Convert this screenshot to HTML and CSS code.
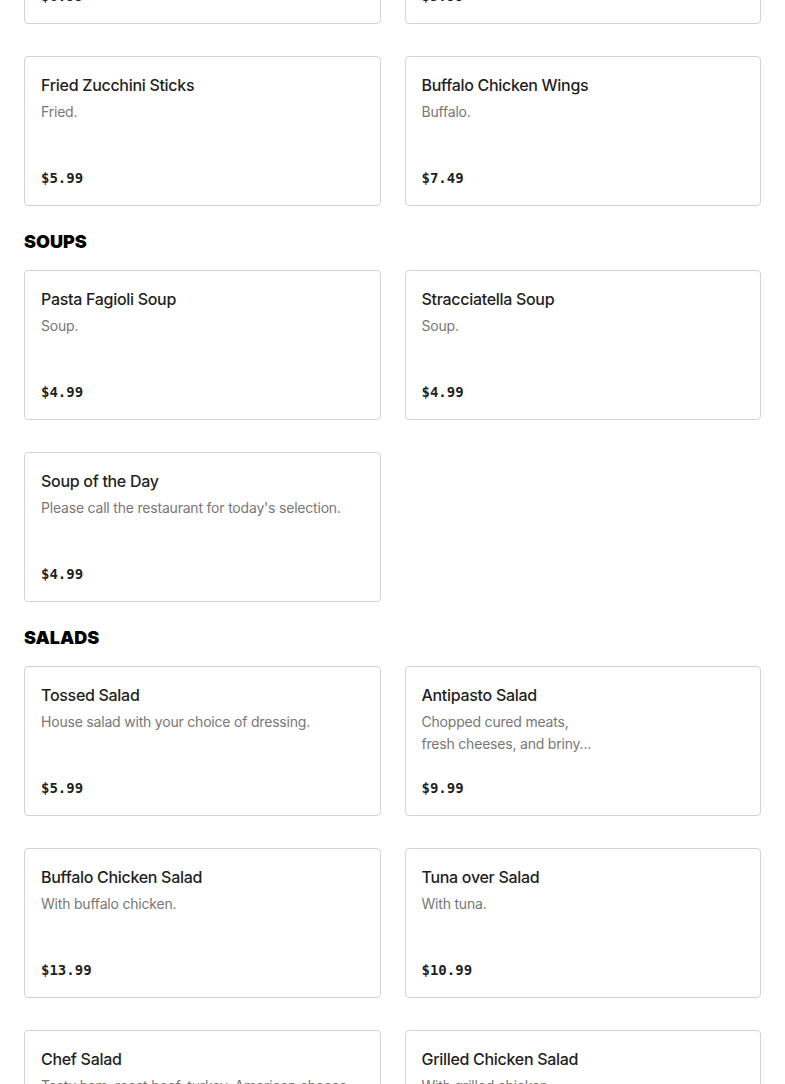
FILE: index.html
```html
<!DOCTYPE html>
<html lang="en">
<head>
<meta charset="utf-8">
<title>Menu</title>
<link rel="stylesheet" href="styles.css">
</head>
<body>
<main class="menu">
  <section class="section">
    <div class="grid">
      <article class="card"><h3 class="title">Mozzarella Sticks</h3><p class="desc">Fried.</p><p class="price">$6.99</p></article>
      <article class="card"><h3 class="title">Garlic Knots</h3><p class="desc">Baked.</p><p class="price">$5.99</p></article>
      <article class="card"><h3 class="title">Fried Zucchini Sticks</h3><p class="desc">Fried.</p><p class="price">$5.99</p></article>
      <article class="card"><h3 class="title">Buffalo Chicken Wings</h3><p class="desc">Buffalo.</p><p class="price">$7.49</p></article>
    </div>
  </section>
  <section class="section">
    <h2 class="heading">SOUPS</h2>
    <div class="grid">
      <article class="card"><h3 class="title">Pasta Fagioli Soup</h3><p class="desc">Soup.</p><p class="price">$4.99</p></article>
      <article class="card"><h3 class="title">Stracciatella Soup</h3><p class="desc">Soup.</p><p class="price">$4.99</p></article>
      <article class="card"><h3 class="title">Soup of the Day</h3><p class="desc">Please call the restaurant for today's selection.</p><p class="price">$4.99</p></article>
    </div>
  </section>
  <section class="section">
    <h2 class="heading">SALADS</h2>
    <div class="grid">
      <article class="card"><h3 class="title">Tossed Salad</h3><p class="desc">House salad with your choice of dressing.</p><p class="price">$5.99</p></article>
      <article class="card"><h3 class="title">Antipasto Salad</h3><p class="desc">Chopped cured meats,<br>fresh cheeses, and briny...</p><p class="price">$9.99</p></article>
      <article class="card"><h3 class="title">Buffalo Chicken Salad</h3><p class="desc">With buffalo chicken.</p><p class="price">$13.99</p></article>
      <article class="card"><h3 class="title">Tuna over Salad</h3><p class="desc">With tuna.</p><p class="price">$10.99</p></article>
      <article class="card"><h3 class="title">Chef Salad</h3><p class="desc">Tasty ham, roast beef, turkey, American cheese...</p><p class="price">$12.99</p></article>
      <article class="card"><h3 class="title">Grilled Chicken Salad</h3><p class="desc">With grilled chicken.</p><p class="price">$12.99</p></article>
    </div>
  </section>
</main>
</body>
</html>
```

FILE: styles.css
```css
* { box-sizing: border-box; }
html, body { margin: 0; padding: 0; background: #ffffff; }
body { font-family: Inter, "Noto Sans", sans-serif; color: #1f1f1f; }
.menu { padding: 0 24px; margin-top: -126px; }
.section { display: flex; flex-direction: column; }
.heading {
  margin: 24px 0 16px;
  font-family: Inter, sans-serif;
  font-weight: 900;
  font-size: 18px;
  line-height: 24px;
  color: #000;
}
.grid {
  display: grid;
  grid-template-columns: 1fr 1fr;
  column-gap: 24px;
  row-gap: 32px;
}
.card {
  height: 150px;
  border: 1px solid #d3d3d3;
  border-radius: 4px;
  padding: 16px;
  display: flex;
  flex-direction: column;
  background: #fff;
}
.title {
  margin: 0;
  font-size: 16px;
  font-weight: 500;
  letter-spacing: -0.3px;
  line-height: 24px;
  color: #1f1f1f;
}
.desc {
  margin: 4px 0 0;
  font-size: 14px;
  letter-spacing: -0.2px;
  line-height: 22px;
  color: #777777;
}
.price {
  margin: auto 0 0;
  font-family: "DejaVu Sans Mono", "Liberation Mono", monospace;
  font-weight: 700;
  font-size: 14px;
  line-height: 22px;
  color: #1f1f1f;
}
```
